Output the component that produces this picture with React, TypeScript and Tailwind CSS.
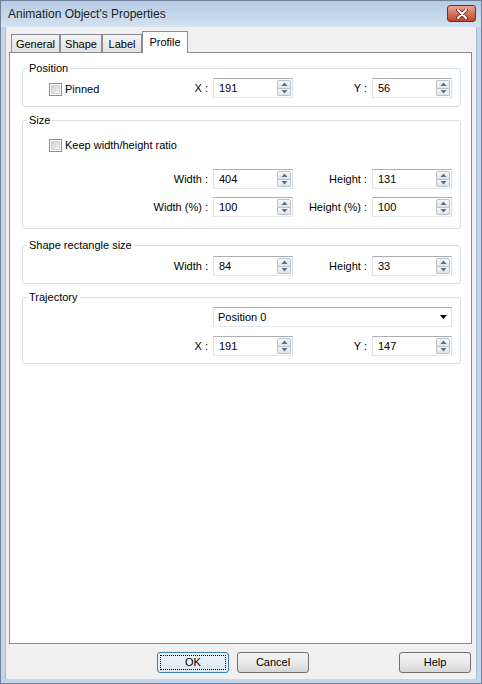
import React from "react";

function Check({ label }: { label: string }) {
  return (
    <div className="flex items-center gap-[3px]">
      <span className="flex h-[13px] w-[13px] items-center justify-center border border-[#8e8f8f] bg-white">
        <span className="h-[9px] w-[9px] border border-[#d0d2d5] bg-gradient-to-br from-[#cbcfd5] to-[#f6f6f6]" />
      </span>
      <span>{label}</span>
    </div>
  );
}

function Arrow({ up }: { up?: boolean }) {
  return (
    <svg width="7" height="4" viewBox="0 0 7 4">
      <path d={up ? "M0.5 4 L3.5 0.5 L6.5 4 Z" : "M0.5 0 L3.5 3.5 L6.5 0 Z"} fill="#5a6f91" />
    </svg>
  );
}

function Spin({ value }: { value: string }) {
  return (
    <div className="flex h-[20px] w-[80px] border border-[#abadb3] border-b-[#e3e9ef] border-l-[#e2e3ea] border-r-[#dbdfe6] bg-white">
      <span className="flex-1 pl-[5px] leading-[18px]">{value}</span>
      <div className="my-px mr-px flex w-[14px] flex-col">
        <div className="flex flex-1 items-center justify-center rounded-t-[2px] border border-[#bcc2cb] bg-gradient-to-b from-[#f6f7f9] to-[#e1e5ea]">
          <Arrow up />
        </div>
        <div className="flex flex-1 items-center justify-center rounded-b-[2px] border border-t-0 border-[#bcc2cb] bg-gradient-to-b from-[#f6f7f9] to-[#e1e5ea]">
          <Arrow />
        </div>
      </div>
    </div>
  );
}

function Row({ l1, v1, l2, v2, left }: { l1: string; v1: string; l2: string; v2: string; left?: React.ReactNode }) {
  return (
    <div className="flex h-[20px] items-center">
      <div className="flex w-[190px] items-center justify-between pr-[5px]">
        <div className="ml-[26px] mt-[2px]">{left}</div>
        <span>{l1}</span>
      </div>
      <Spin value={v1} />
      <div className="flex w-[79px] justify-end pr-[5px]">{l2}</div>
      <Spin value={v2} />
    </div>
  );
}

function Group({ title, className, children }: { title: string; className: string; children: React.ReactNode }) {
  return (
    <div className={`ml-[12px] w-[439px] rounded-[3px] border border-[#d5dfe5] ${className}`}>
      <div className="-mt-[8px] ml-[4px] w-fit bg-white px-[2px] leading-[14px]">{title}</div>
      {children}
    </div>
  );
}

function Btn({ label, focus, className }: { label: string; focus?: boolean; className?: string }) {
  return (
    <div
      className={`flex h-[21px] w-[72px] items-center justify-center rounded-[3px] border p-[2px] ${
        focus ? "border-[#3c7fb1] bg-gradient-to-b from-[#eef5fa] to-[#dbe7f0]" : "border-[#707070] bg-gradient-to-b from-[#f2f2f2] via-[#ebebeb] to-[#d6d6d6]"
      } ${className ?? ""}`}
    >
      <div className={`flex h-full w-full items-center justify-center ${focus ? "border border-dotted border-black" : ""}`}>{label}</div>
    </div>
  );
}

export default function App() {
  const tabs = ["General", "Shape", "Label"];
  const widths = ["w-[49px]", "w-[42px]", "w-[40px]"];
  return (
    <div className="flex h-[684px] w-[482px] flex-col border border-[#6f8299] bg-[#c3d5ea] font-['Liberation_Sans',sans-serif] text-[11px] text-black">
      <div className="flex h-[26px] items-start justify-between bg-gradient-to-b from-[#b4cae3] to-[#d4e2f1] pl-[7px] pr-[5px]">
        <span className="mt-[5px] text-[12px] leading-[16px] text-[#1e1e1e]">Animation Object's Properties</span>
        <div className="mt-[4px] flex h-[17px] w-[29px] items-center justify-center rounded-[3px] border border-[#6f2e25] bg-gradient-to-b from-[#e9a695] via-[#d2745e] to-[#c0412a]">
          <svg width="12" height="10" viewBox="0 0 12 10">
            <path d="M2 1 L10 9 M10 1 L2 9" stroke="#5a1f17" strokeWidth="3.6" strokeLinecap="round" />
            <path d="M2 1 L10 9 M10 1 L2 9" stroke="#ffffff" strokeWidth="2" strokeLinecap="round" />
          </svg>
        </div>
      </div>
      <div className="mx-[4px] mb-[4px] flex h-[652px] flex-col border-l border-r border-[#a9bbd0] bg-[#f0f0f0]">
        <div className="flex h-[25px] items-end pl-[5px]">
          {tabs.map((t, i) => (
            <div key={t} className={`flex h-[18px] ${widths[i]} items-center justify-center border border-b-0 border-[#898c95] bg-gradient-to-b from-[#f3f3f3] to-[#e2e2e2] leading-[16px]`}>
              {t}
            </div>
          ))}
          <div className="relative z-10 -mb-px flex h-[22px] w-[46px] items-start justify-center border border-b-0 border-[#898c95] bg-white pt-[2px] leading-[16px]">
            Profile
          </div>
        </div>
        <div className="ml-[3px] flex h-[592px] w-[463px] flex-col border border-[#898c95] bg-white">
          <Group title="Position" className="mt-[15px] pb-[8px]">
            <div className="mt-[3px]">
              <Row l1="X :" v1="191" l2="Y :" v2="56" left={<Check label="Pinned" />} />
            </div>
          </Group>
          <Group title="Size" className="mt-[13px] pb-[11px]">
            <div className="ml-[26px] mt-[11px] flex h-[14px] items-center">
              <Check label="Keep width/height ratio" />
            </div>
            <div className="mt-[17px]">
              <Row l1="Width :" v1="404" l2="Height :" v2="131" />
            </div>
            <div className="mt-[8px]">
              <Row l1="Width (%) :" v1="100" l2="Height (%) :" v2="100" />
            </div>
          </Group>
          <Group title="Shape rectangle size" className="mt-[16px] pb-[7px]">
            <div className="mt-[4px]">
              <Row l1="Width :" v1="84" l2="Height :" v2="33" />
            </div>
          </Group>
          <Group title="Trajectory" className="mt-[13px] pb-[7px]">
            <div className="ml-[190px] mt-[3px] flex h-[20px] w-[239px] items-center justify-between border border-[#abadb3] border-b-[#e3e9ef] border-l-[#e2e3ea] border-r-[#dbdfe6] bg-white pl-[4px] pr-[4px]">
              <span>Position 0</span>
              <svg width="7" height="4" viewBox="0 0 7 4">
                <path d="M0 0 L3.5 4 L7 0 Z" fill="#000" />
              </svg>
            </div>
            <div className="mt-[9px]">
              <Row l1="X :" v1="191" l2="Y :" v2="147" />
            </div>
          </Group>
        </div>
        <div className="mt-[8px] flex pl-[151px]">
          <Btn label="OK" focus />
          <Btn label="Cancel" className="ml-[8px]" />
          <Btn label="Help" className="ml-[90px]" />
        </div>
      </div>
    </div>
  );
}
